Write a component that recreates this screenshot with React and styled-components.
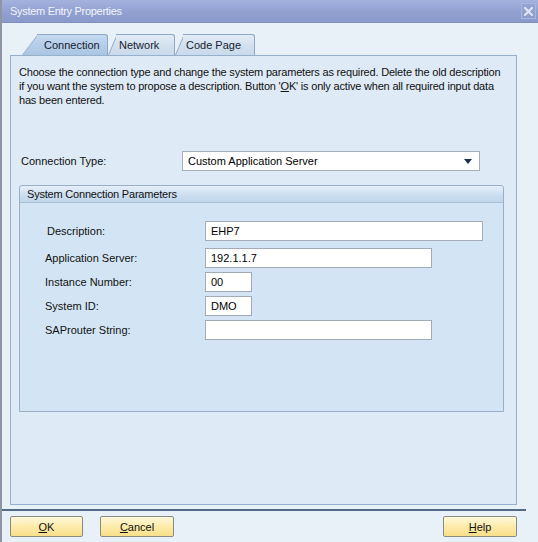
import React from 'react';
import styled, { createGlobalStyle } from 'styled-components';

const GlobalStyle = createGlobalStyle`
  html, body {
    margin: 0;
    padding: 0;
  }
  body {
    font-family: 'Liberation Sans', Arial, sans-serif;
    font-size: 11px;
    color: #000;
    background: #e8f0f8;
  }
`;

const tabs = [
  { label: 'Connection', active: true, width: 86, slant: 16, indent: 22 },
  { label: 'Network', width: 67, slant: 9, indent: 11 },
  { label: 'Code Page', width: 80, slant: 9, indent: 11 },
];

const fields = [
  { label: 'Description:', value: 'EHP7', width: 278, indent: 2 },
  { label: 'Application Server:', value: '192.1.1.7', width: 227, gap: 3 },
  { label: 'Instance Number:', value: '00', width: 47 },
  { label: 'System ID:', value: 'DMO', width: 47 },
  { label: 'SAProuter String:', value: '', width: 227 },
];

export default function App() {
  return (
    <>
      <GlobalStyle />
      <Window>
        <TitleBar>
          <Title>System Entry Properties</Title>
          <CloseButton aria-label="Close">
            <svg width="9" height="9" viewBox="0 0 9 9">
              <path d="M1 1 L8 8 M8 1 L1 8" stroke="#dfe6f6" strokeWidth="2.2" strokeLinecap="square" />
            </svg>
          </CloseButton>
        </TitleBar>

        <Content>
          <TabStrip>
            {tabs.map((t, i) => (
              <Tab
                key={t.label}
                $active={t.active}
                $width={t.width}
                $slant={t.slant}
                $indent={t.indent}
                $z={tabs.length - i + (t.active ? 10 : 0)}
              >
                {t.label}
              </Tab>
            ))}
          </TabStrip>

          <Panel>
            <Intro>
              Choose the connection type and change the system parameters as required. Delete the old description
              <br />
              if you want the system to propose a description. Button '<u>O</u>K' is only active when all required input data
              <br />
              has been entered.
            </Intro>

            <TypeRow>
              <TypeLabel>Connection Type:</TypeLabel>
              <Select>
                <span>Custom Application Server</span>
                <Arrow />
              </Select>
            </TypeRow>

            <Group>
              <GroupHeader>System Connection Parameters</GroupHeader>
              <GroupBody>
                {fields.map((f) => (
                  <FieldRow key={f.label} $gap={f.gap}>
                    <FieldLabel $indent={f.indent}>{f.label}</FieldLabel>
                    <Input $width={f.width}>{f.value}</Input>
                  </FieldRow>
                ))}
              </GroupBody>
            </Group>
          </Panel>
        </Content>

        <Separator />

        <Footer>
          <Button $width={73}>
            <u>O</u>K
          </Button>
          <Button $width={74}>
            <u>C</u>ancel
          </Button>
          <Spacer />
          <Button $width={74}>
            <u>H</u>elp
          </Button>
        </Footer>
      </Window>
    </>
  );
}

const Window = styled.div`
  box-sizing: border-box;
  width: 538px;
  height: 542px;
  display: flex;
  flex-direction: column;
  background: #e8f0f8;
  border-left: 2px solid #8e95a4;
  overflow: hidden;
`;

const TitleBar = styled.div`
  flex: none;
  height: 23px;
  margin-left: -2px;
  display: flex;
  align-items: center;
  justify-content: space-between;
  padding: 0 2px 1px 10px;
  background: linear-gradient(#a3b2dd, #909fcf 60%, #8a9aca);
  border-bottom: 1px solid #7f8fbd;
  box-sizing: border-box;
`;

const Title = styled.span`
  font-size: 11px;
  letter-spacing: -0.3px;
  color: #f3f5fc;
`;

const CloseButton = styled.div`
  width: 15px;
  height: 16px;
  box-sizing: border-box;
  display: flex;
  align-items: center;
  justify-content: center;
  background: linear-gradient(#96a6d4, #8c9ccb);
  border: 1px solid #aab7df;
  margin-top: 1px;
`;

const Content = styled.div`
  flex: 1;
  display: flex;
  flex-direction: column;
  padding: 11px 21px 0 8px;
  min-height: 0;
`;

const TabStrip = styled.div`
  display: flex;
  height: 21px;
  padding-left: 12px;
`;

const Tab = styled.div`
  position: relative;
  z-index: ${(p) => p.$z};
  box-sizing: border-box;
  width: ${(p) => p.$width}px;
  height: 21px;
  display: flex;
  align-items: center;
  padding: 1px 0 0 ${(p) => p.$indent}px;
  font-size: 11px;
  color: #18222e;

  &::before,
  &::after {
    content: '';
    position: absolute;
    z-index: -1;
    box-sizing: border-box;
    background: ${(p) =>
      p.$active
        ? 'linear-gradient(#c6daf0, #b3cce8 55%, #abc6e5)'
        : 'linear-gradient(#e3ecf6, #d2e0ef 55%, #c9daec)'};
    border-top: 1px solid #8da7c6;
  }

  &::before {
    left: 0;
    top: 0;
    width: ${(p) => p.$slant + 8}px;
    height: 21px;
    border-left: 1px solid #8da7c6;
    transform-origin: bottom left;
    transform: skewX(${(p) => (-Math.atan(p.$slant / 21) * 180) / Math.PI}deg);
  }

  &::after {
    left: ${(p) => p.$slant - 1}px;
    right: 0;
    top: 0;
    bottom: 0;
    border-right: 1px solid #8da7c6;
    border-top-right-radius: 3px;
  }
`;

const Panel = styled.div`
  flex: 1;
  box-sizing: border-box;
  border: 1px solid #97b0cb;
  background: #deeaf5;
  padding: 9px 8px 0 8px;
  display: flex;
  flex-direction: column;
  min-height: 0;
`;

const Intro = styled.p`
  margin: 0;
  font-size: 11px;
  line-height: 14px;
  letter-spacing: -0.19px;
  white-space: nowrap;
  color: #111;
`;

const TypeRow = styled.div`
  display: flex;
  align-items: center;
  margin-top: 44px;
`;

const TypeLabel = styled.span`
  width: 161px;
  padding-left: 2px;
  font-size: 11px;
  color: #111;
`;

const Select = styled.div`
  box-sizing: border-box;
  width: 298px;
  height: 20px;
  display: flex;
  align-items: center;
  justify-content: space-between;
  padding: 0 7px 0 5px;
  background: #fff;
  border: 1px solid #a6aeb8;
  font-size: 11px;
`;

const Arrow = styled.span`
  width: 0;
  height: 0;
  border-left: 4.5px solid transparent;
  border-right: 4.5px solid transparent;
  border-top: 5px solid #1e2f4e;
`;

const Group = styled.div`
  box-sizing: border-box;
  width: 485px;
  height: 227px;
  margin-top: 14px;
  border: 1px solid #99afc8;
  border-radius: 3px 3px 0 0;
  background: #d3e5f4;
  display: flex;
  flex-direction: column;
`;

const GroupHeader = styled.div`
  height: 16px;
  display: flex;
  align-items: center;
  padding-left: 7px;
  font-size: 11px;
  letter-spacing: -0.2px;
  color: #111;
  background: linear-gradient(#e6eff9, #cbddef 60%, #c2d6eb);
  border-bottom: 1px solid #a9bfd6;
  border-radius: 3px 3px 0 0;
`;

const GroupBody = styled.div`
  display: flex;
  flex-direction: column;
  gap: 4px;
  padding: 18px 0 0 25px;
`;

const FieldRow = styled.div`
  display: flex;
  align-items: center;
  margin-top: ${(p) => p.$gap || 0}px;
`;

const FieldLabel = styled.span`
  width: 160px;
  padding-left: ${(p) => p.$indent || 0}px;
  box-sizing: border-box;
  font-size: 11px;
  color: #111;
`;

const Input = styled.div`
  box-sizing: border-box;
  width: ${(p) => p.$width}px;
  height: 20px;
  display: flex;
  align-items: center;
  padding-left: 5px;
  background: #fff;
  border: 1px solid #a3abb6;
  font-size: 11px;
  color: #000;
`;

const Separator = styled.div`
  flex: none;
  height: 2px;
  margin: 4px 12px 0 -2px;
  background: #526a86;
`;

const Footer = styled.div`
  flex: none;
  display: flex;
  gap: 17px;
  padding: 5px 21px 5px 8px;
`;

const Spacer = styled.div`
  flex: 1;
`;

const Button = styled.div`
  box-sizing: border-box;
  width: ${(p) => p.$width}px;
  height: 21px;
  display: flex;
  align-items: center;
  justify-content: center;
  border: 1px solid #8b8a82;
  border-radius: 2px;
  background: linear-gradient(#fff9dc, #fcebaa 50%, #f8df8a);
  font-size: 11px;
  color: #111;

  u {
    text-underline-offset: 1px;
  }
`;
